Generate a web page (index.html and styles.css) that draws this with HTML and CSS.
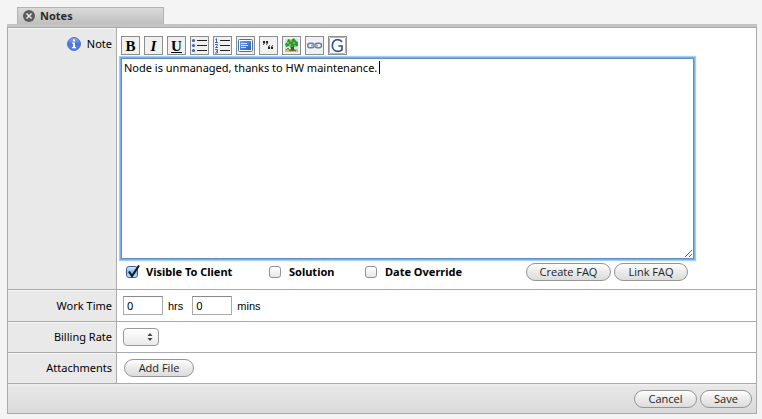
FILE: index.html
```html
<!DOCTYPE html>
<html lang="en">
<head>
<meta charset="utf-8">
<title>Notes</title>
<link rel="stylesheet" href="styles.css">
</head>
<body>
<div class="tab">
  <button type="button" class="close" aria-label="Close">
    <svg width="12" height="12" viewBox="0 0 12 12"><circle cx="6" cy="6" r="6" fill="#5c5c5c"/><path d="M3.5 3.5l5 5M8.5 3.5l-5 5" stroke="#e2e2e2" stroke-width="1.7"/></svg>
  </button>
  <span>Notes</span>
</div>
<form class="panel">
  <div class="row note-row">
    <div class="label">
      <svg width="14" height="14" viewBox="0 0 14 14"><defs><linearGradient id="info" x2="0" y2="1"><stop offset="0" stop-color="#93b2f3"/><stop offset=".5" stop-color="#4b71dc"/><stop offset="1" stop-color="#5c8bf0"/></linearGradient></defs><circle cx="7" cy="7" r="6.4" fill="url(#info)" stroke="#4a66c8"/><path d="M6 2.5h2v2H6zM5 5.5h3v4.500h1v1.200H5V10h1V6.700H5z" fill="#fff"/></svg>
      <label for="note">Note</label>
    </div>
    <div class="field">
      <div class="toolbar">
        <button type="button" class="tool bold">B</button>
        <button type="button" class="tool italic">I</button>
        <button type="button" class="tool underline">U</button>
        <button type="button" class="tool" aria-label="Bulleted list"><svg width="17" height="17" viewBox="0 0 17 17"><g fill="#4167b2"><circle cx="2.500" cy="3.500" r="1.600"/><circle cx="2.500" cy="8.500" r="1.600"/><circle cx="2.500" cy="13.500" r="1.600"/></g><path d="M6 3.500h10M6 8.500h10M6 13.500h10" stroke="#222"/></svg></button>
        <button type="button" class="tool" aria-label="Numbered list"><svg width="17" height="17" viewBox="0 0 17 17"><path d="M1.500 2.500l1-1v4M1 5.500h3M1 7.500h2.500v1L1.500 10.500H4M1 12.500h2.500v3.500H1M2 14.300h1.500" fill="none" stroke="#4263c4"/><path d="M6 3.500h10M6 8.500h10M6 13.500h10" stroke="#222"/></svg></button>
        <button type="button" class="tool" aria-label="Text block"><svg width="17" height="17" viewBox="0 0 17 17"><defs><linearGradient id="blk" x2="1" y2="1"><stop stop-color="#6ba0ef"/><stop offset="1" stop-color="#275bc1"/></linearGradient></defs><rect x="1.500" y="2.500" width="14" height="12" rx="1" fill="#fff" stroke="#3f6fc8"/><rect x="3" y="4" width="11" height="9" fill="url(#blk)"/><path d="M4 6.500h6M4 8.500h7M4 10.500h5" stroke="#d5e5ff"/></svg></button>
        <button type="button" class="tool" aria-label="Quote"><svg width="17" height="17" viewBox="0 0 17 17"><path d="M3 4h2v2L3.500 8H3L3.700 6H3zM6 4h2v2L6.500 8H6L6.700 6H6zM10 12H8v-2L9.500 8h.5L9.300 10H10zM13 12h-2v-2l1.500-2h.5l-.7 2h.7z" fill="#222"/></svg></button>
        <button type="button" class="tool" aria-label="Image"><svg width="17" height="17" viewBox="0 0 17 17"><path fill="#cbe6fa" d="M2 2h13v13H2z"/><path fill="#e9bd3d" d="M2 12h13v3H2z"/><path d="M7 9l2 1 2-2v4l2 2H6l2-2z" fill="#744319"/><path d="M2 7l2-2 1-3 3 1 3-2 2 3 2 1v4l-3 1-2-1-2 1-2-1-3 1z" fill="#2f9632"/><path d="M4 6h2M7 4h2M10 6h2M6 8h2M11 9h2" stroke="#8bd252" stroke-width="1.500"/><path d="M3 13l2-2 2 3 3-1 3 1" stroke="#4c8d28" fill="none"/></svg></button>
        <button type="button" class="tool" aria-label="Link"><svg width="17" height="17" viewBox="0 0 17 17"><g fill="none" stroke="#6c80a0" stroke-width="1.500"><rect x="1.700" y="6.200" width="6.500" height="4.600" rx="2.300"/><rect x="9" y="6.200" width="6.500" height="4.600" rx="2.300"/></g><path d="M5 8.500h7" stroke="#8aa5cd" stroke-width="2"/></svg></button>
        <button type="button" class="tool" aria-label="Google search"><svg width="17" height="17" viewBox="0 0 17 17"><path fill="#fff" d="M1 1h15v15H1z"/><path d="M1 .500h15" stroke="#a9b2fa"/><path d="M.500 1v15" stroke="#f391a5"/><path d="M16.500 1v15" stroke="#f391a5"/><path d="M1 16.500h15" stroke="#80db92"/><path d="M13 5C12 3.400 10.500 2.700 8.700 2.700 5.500 2.700 3.300 5.100 3.300 8.500S5.500 14.300 8.900 14.300c1.500 0 3-.5 4.100-1.500V9H9.300" fill="none" stroke="#2d51a0" stroke-width="1.700"/></svg></button>
      </div>
      <div class="editor">
        <textarea id="note" spellcheck="false">Node is unmanaged, thanks to HW maintenance.</textarea>
        <span class="caret"></span>
      </div>
      <div class="options">
        <label class="option visible"><span class="tick"><input type="checkbox" checked><svg width="15" height="15" viewBox="0 0 15 15"><path d="M3 7.500l3 4.500L13 1.500" fill="none" stroke="#101b2c" stroke-width="2.200"/></svg></span>Visible To Client</label>
        <label class="option solution"><span class="tick"><input type="checkbox"></span>Solution</label>
        <label class="option"><span class="tick"><input type="checkbox"></span>Date Override</label>
        <div class="faq"><button type="button" class="pill wide">Create FAQ</button><button type="button" class="pill medium">Link FAQ</button></div>
      </div>
    </div>
  </div>
  <div class="row">
    <div class="label"><label for="hours">Work Time</label></div>
    <div class="field inline time"><input type="text" id="hours" value="0"><label for="hours">hrs</label><input type="text" id="mins" value="0"><label for="mins">mins</label></div>
  </div>
  <div class="row">
    <div class="label"><label for="rate">Billing Rate</label></div>
    <div class="field inline"><span class="select"><select id="rate"><option></option></select><svg width="6" height="8" viewBox="0 0 6 8"><path d="M3 0l2.500 3h-5zM3 8L.5 5h5z" fill="#444"/></svg></span></div>
  </div>
  <div class="row">
    <div class="label"><label for="file">Attachments</label></div>
    <div class="field inline"><button type="button" id="file" class="pill file">Add File</button></div>
  </div>
  <div class="footer"><button type="button" class="pill cancel">Cancel</button><button type="submit" class="pill save">Save</button></div>
</form>
</body>
</html>
```
FILE: styles.css
```css
* { box-sizing: border-box; }
body {
  margin: 0;
  padding: 7px 5px 5px 7px;
  background: #f4f4f4;
  color: #000;
  font: 11px/16px "Noto Sans", "Open Sans", sans-serif;
}
button, input, select, textarea { font: inherit; color: inherit; margin: 0; }
svg { display: block; flex: none; }
.tab {
  display: flex;
  align-items: center;
  gap: 5px;
  width: 147px;
  height: 17px;
  margin-left: 10px;
  padding-left: 5px;
  border: 1px solid #b2b2b2;
  border-bottom: 0;
  background: linear-gradient(#dadada, #bfbfbf);
  color: #2b2b2b;
  font-weight: bold;
}
.close { padding: 0; border: 0; background: none; }
.panel {
  border: 1px solid #aaa;
  border-top: 0;
  background: #fff;
}
.panel::before {
  content: "";
  display: block;
  height: 3px;
  margin: 0 -1px;
  background: #c4c4c4;
  border-bottom: 1px solid #aaa;
}
.row {
  display: grid;
  grid-template-columns: 109px 1fr;
  min-height: 31px;
  border-bottom: 1px solid #aaa;
}
.label {
  display: flex;
  align-items: center;
  justify-content: flex-end;
  gap: 6px;
  padding-right: 4px;
  border-right: 1px solid #aaa;
  background: #e9e9e9;
  box-shadow: inset 0 1px #f6f6f6;
}
.note-row .label { align-items: flex-start; padding-top: 8px; }
.note-row .label svg { margin-top: 1px; }
.inline { display: flex; align-items: center; padding-left: 6px; }
.note-row .field { padding: 8px 62px 8px 4px; }
.toolbar { display: flex; gap: 4px; }
.tool {
  display: flex;
  align-items: center;
  justify-content: center;
  width: 19px;
  height: 19px;
  padding: 0;
  border: 1px solid #8d8d8d;
  background: #f1f1f1;
  font: bold 15px/16px "Liberation Serif", serif;
}
.italic { font-style: italic; }
.underline { text-decoration: underline; }
.editor { position: relative; margin-top: 3px; }
textarea {
  display: block;
  width: 100%;
  height: 201px;
  padding: 1px 2px;
  border: 1px solid #5c8fc4;
  outline: 0;
  box-shadow: 0 0 0 1px #7eafe0, 0 0 1px 2px #a9cdf0;
  background: #fff;
}
.caret {
  position: absolute;
  left: 258px;
  top: 3px;
  width: 1px;
  height: 13px;
  background: #000;
}
.options {
  display: flex;
  align-items: center;
  height: 18px;
  margin-top: 4px;
  padding-left: 5px;
  font-weight: bold;
}
.option { display: flex; align-items: center; gap: 8px; }
.visible { width: 143px; }
.solution { width: 96px; }
.tick { position: relative; display: flex; }
.tick input {
  appearance: none;
  width: 12px;
  height: 12px;
  border: 1px solid #949494;
  border-radius: 3px;
  background: linear-gradient(#fff, #e6e6e6);
}
.tick input:checked {
  border-color: #4c5b9b;
  background: linear-gradient(#d7e9fb, #7fbdf2 50%, #b9eafe);
}
.tick svg { position: absolute; left: 0; top: -2px; pointer-events: none; }
.faq { display: flex; gap: 3px; margin-left: auto; }
.pill {
  height: 18px;
  padding: 0;
  border: 1px solid #959595;
  border-radius: 9px;
  background: linear-gradient(#fff, #ececec 45%, #dcdcdc);
  color: #222;
  font: 11px/14px "Open Sans", sans-serif;
}
.wide { width: 85px; }
.medium { width: 74px; margin-right: 6px; }
.file { width: 70px; margin-left: 1px; }
.cancel { width: 63px; }
.save { width: 52px; }
.time { min-height: 31px; gap: 5px; font-family: "Liberation Sans", sans-serif; }
.time input {
  width: 40px;
  height: 19px;
  padding: 0 3px;
  border: 1px solid #aaa;
  border-top-color: #888;
  font-family: "Noto Sans", sans-serif;
}
.time label + input { margin-left: 4px; }
.select { position: relative; display: flex; }
select {
  appearance: none;
  width: 36px;
  height: 18px;
  border: 1px solid #999;
  border-radius: 4px;
  background: linear-gradient(#fff, #e9e9e9);
}
.select svg { position: absolute; right: 6px; top: 5px; pointer-events: none; }
.footer {
  display: flex;
  align-items: center;
  justify-content: flex-end;
  gap: 3px;
  height: 30px;
  padding-right: 4px;
  border-bottom: 1px solid #aaa;
  background: linear-gradient(#f0f0f0, #e7e7e7 10%, #dadada);
  margin-bottom: -1px;
}
```
